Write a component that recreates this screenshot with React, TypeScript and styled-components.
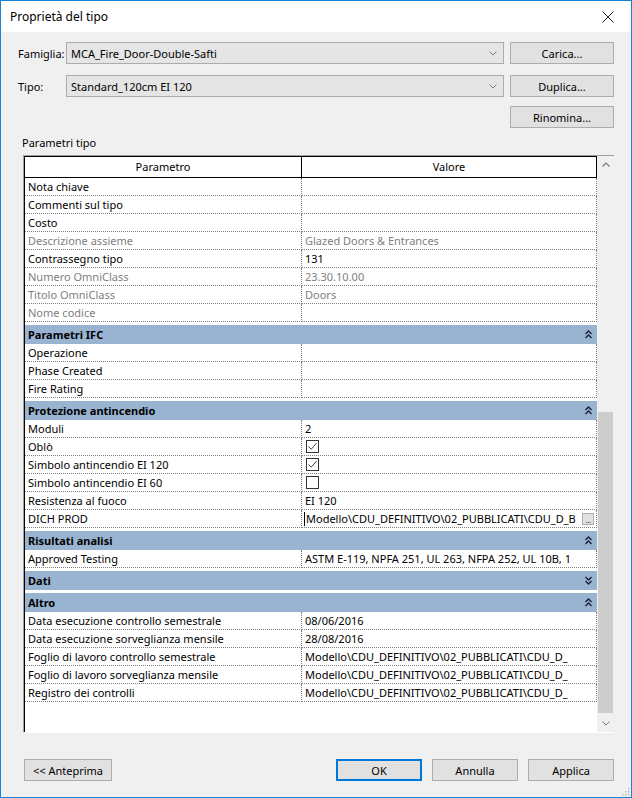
import React from "react";
import styled, { createGlobalStyle } from "styled-components";

const GlobalStyle = createGlobalStyle`
  html, body {
    margin: 0;
    padding: 0;
    background: #f0f0f0;
  }
  body {
    font-family: "Noto Sans", "Segoe UI", sans-serif;
    font-size: 11px;
    color: #000;
  }
  * {
    box-sizing: border-box;
  }
`;

const Window = styled.div`
  width: 632px;
  height: 798px;
  border: 1px solid #1883d7;
  background: #f0f0f0;
  display: flex;
  flex-direction: column;
`;

const TitleBar = styled.div`
  height: 31px;
  flex-shrink: 0;
  background: #fff;
  display: flex;
  align-items: center;
  justify-content: space-between;
  padding-left: 9px;
`;

const Title = styled.div`
  font-size: 12px;
  line-height: 16px;
`;

const CloseButton = styled.div`
  width: 46px;
  height: 31px;
  display: flex;
  align-items: center;
  justify-content: center;
`;

const Body = styled.div`
  flex: 1;
  display: flex;
  flex-direction: column;
  padding: 10px 17px 16px 17px;
`;

const FieldRow = styled.div<{ $gap?: number }>`
  display: grid;
  grid-template-columns: 42px 438px 104px;
  column-gap: 6px;
  align-items: center;
  height: 22px;
  margin-bottom: ${(p) => p.$gap ?? 0}px;
`;

const FieldLabel = styled.div`
  line-height: 15px;
`;

const Combo = styled.div`
  height: 22px;
  background: #e5e5e5;
  border: 1px solid #acacac;
  display: flex;
  align-items: center;
  justify-content: space-between;
  padding: 0 6px 0 4px;
`;

const Button = styled.div<{ $width?: number; $default?: boolean }>`
  width: ${(p) => (p.$width ? `${p.$width}px` : "auto")};
  height: 22px;
  background: #e1e1e1;
  border: 1px solid ${(p) => (p.$default ? "#0078d7" : "#adadad")};
  box-shadow: ${(p) => (p.$default ? "inset 0 0 0 1px #0078d7" : "none")};
  display: flex;
  align-items: center;
  justify-content: center;
  line-height: 15px;
`;

const SideButton = styled(Button)`
  grid-column: 3;
  margin-top: 1px;
`;

const SectionLabel = styled.div`
  margin: 8px 0 5px 4px;
  line-height: 15px;
`;

const TableFrame = styled.div`
  margin-left: 5px;
  width: 591px;
  height: 578px;
  border-top: 1px solid #a0a0a0;
  border-left: 1px solid #a0a0a0;
  border-bottom: 1px solid #fff;
  display: flex;
  background: #fff;
`;

const Grid = styled.div`
  width: 573px;
  border-left: 1px solid #000;
  background: #fff;
  display: flex;
  flex-direction: column;
`;

const HeaderRow = styled.div`
  display: grid;
  grid-template-columns: 277px 295px;
  height: 22px;
  border-top: 1px solid #000;
  border-bottom: 1px solid #000;
`;

const HeaderCell = styled.div`
  display: flex;
  align-items: center;
  justify-content: center;
  border-right: 1px solid #000;
  line-height: 15px;
  padding-bottom: 2px;
`;

const Row = styled.div`
  display: grid;
  grid-template-columns: 277px 295px;
  height: 18px;
`;

const Cell = styled.div<{ $muted?: boolean }>`
  display: flex;
  align-items: center;
  height: 18px;
  padding: 0 0 0 3px;
  border-right: 1px dotted #808080;
  border-bottom: 1px dotted #808080;
  color: ${(p) => (p.$muted ? "#808080" : "#000")};
  line-height: 16px;
  white-space: nowrap;
  overflow: hidden;
`;

const CellText = styled.span`
  flex: 1;
  overflow: hidden;
  white-space: nowrap;
`;

const Caret = styled.span`
  width: 1px;
  height: 14px;
  background: #000;
  margin: 0 1px 0 -1px;
  flex-shrink: 0;
`;

const Browse = styled.span`
  width: 12px;
  height: 12px;
  flex-shrink: 0;
  margin-right: 2px;
  background: #e1e1e1;
  border: 1px solid #adadad;
  font-size: 8px;
  line-height: 8px;
  display: flex;
  align-items: flex-end;
  justify-content: center;
  color: #333;
  letter-spacing: -0.5px;
`;

const CheckBox = styled.span`
  width: 13px;
  height: 13px;
  border: 1px solid #333;
  background: #fff;
  display: flex;
  align-items: center;
  justify-content: center;
  margin-left: 1px;
`;

const GroupRow = styled.div`
  margin-top: 3px;
  height: 19px;
  background: #99b4d1;
  display: flex;
  align-items: center;
  justify-content: space-between;
  padding: 0 5px 1px 3px;
  font-weight: 700;
  line-height: 15px;
`;

const ScrollBar = styled.div`
  width: 17px;
  background: #f0f0f0;
  display: flex;
  flex-direction: column;
  align-items: center;
`;

const ScrollArrow = styled.div`
  width: 17px;
  height: 17px;
  display: flex;
  align-items: center;
  justify-content: center;
  flex-shrink: 0;
`;

const Thumb = styled.div`
  width: 15px;
  height: 301px;
  margin-top: 239px;
  background: #cdcdcd;
`;

const ScrollSpacer = styled.div`
  flex: 1;
`;

const Footer = styled.div`
  margin-top: auto;
  display: flex;
  align-items: center;
  gap: 10px;
  padding-left: 6px;
`;

const FooterSpacer = styled.div`
  flex: 1;
`;

const Grip = styled.svg`
  position: absolute;
  right: 2px;
  bottom: 2px;
`;

const WindowWrap = styled.div`
  position: relative;
  width: 632px;
  height: 798px;
`;

type Value =
  | { kind: "text"; text: string; muted?: boolean }
  | { kind: "check"; checked: boolean }
  | { kind: "path"; text: string };

type Param = { name: string; muted?: boolean; value?: Value };
type Section = { title?: string; open?: boolean; rows: Param[] };

const path = "Modello\\CDU_DEFINITIVO\\02_PUBBLICATI\\CDU_D_";

const sections: Section[] = [
  {
    rows: [
      { name: "Nota chiave" },
      { name: "Commenti sul tipo" },
      { name: "Costo" },
      {
        name: "Descrizione assieme",
        muted: true,
        value: { kind: "text", text: "Glazed Doors & Entrances", muted: true },
      },
      { name: "Contrassegno tipo", value: { kind: "text", text: "131" } },
      {
        name: "Numero OmniClass",
        muted: true,
        value: { kind: "text", text: "23.30.10.00", muted: true },
      },
      {
        name: "Titolo OmniClass",
        muted: true,
        value: { kind: "text", text: "Doors", muted: true },
      },
      { name: "Nome codice", muted: true },
    ],
  },
  {
    title: "Parametri IFC",
    open: true,
    rows: [{ name: "Operazione" }, { name: "Phase Created" }, { name: "Fire Rating" }],
  },
  {
    title: "Protezione antincendio",
    open: true,
    rows: [
      { name: "Moduli", value: { kind: "text", text: "2" } },
      { name: "Oblò", value: { kind: "check", checked: true } },
      { name: "Simbolo antincendio EI 120", value: { kind: "check", checked: true } },
      { name: "Simbolo antincendio EI 60", value: { kind: "check", checked: false } },
      { name: "Resistenza al fuoco", value: { kind: "text", text: "EI 120" } },
      { name: "DICH PROD", value: { kind: "path", text: path + "B" } },
    ],
  },
  {
    title: "Risultati analisi",
    open: true,
    rows: [
      {
        name: "Approved Testing",
        value: { kind: "text", text: "ASTM E-119, NPFA 251, UL 263, NFPA 252, UL 10B, 1" },
      },
    ],
  },
  { title: "Dati", open: false, rows: [] },
  {
    title: "Altro",
    open: true,
    rows: [
      { name: "Data esecuzione controllo semestrale", value: { kind: "text", text: "08/06/2016" } },
      { name: "Data esecuzione sorveglianza mensile", value: { kind: "text", text: "28/08/2016" } },
      { name: "Foglio di lavoro controllo semestrale", value: { kind: "text", text: path } },
      { name: "Foglio di lavoro sorveglianza mensile", value: { kind: "text", text: path } },
      { name: "Registro dei controlli", value: { kind: "text", text: path } },
    ],
  },
];

const Chevron = ({ color = "#7a7a7a" }: { color?: string }) => (
  <svg width="8" height="5" viewBox="0 0 8 5">
    <polyline points="0.5,0.5 4,4 7.5,0.5" fill="none" stroke={color} strokeWidth="1" />
  </svg>
);

const DoubleChevron = ({ up }: { up: boolean }) => (
  <svg width="7" height="9" viewBox="0 0 7 9" style={{ transform: up ? "none" : "rotate(180deg)" }}>
    <polyline points="0.5,4 3.5,1 6.5,4" fill="none" stroke="#1a1a3a" strokeWidth="1.3" />
    <polyline points="0.5,8 3.5,5 6.5,8" fill="none" stroke="#1a1a3a" strokeWidth="1.3" />
  </svg>
);

const Tick = () => (
  <svg width="11" height="11" viewBox="0 0 11 11">
    <polyline points="1.5,5.5 4.2,8.2 9.5,2.2" fill="none" stroke="#444" strokeWidth="1" />
  </svg>
);

const ValueCell = ({ value }: { value?: Value }) => {
  if (!value) return <Cell />;
  if (value.kind === "check")
    return (
      <Cell>
        <CheckBox>{value.checked && <Tick />}</CheckBox>
      </Cell>
    );
  if (value.kind === "path")
    return (
      <Cell>
        <Caret />
        <CellText>{value.text}</CellText>
        <Browse>...</Browse>
      </Cell>
    );
  return (
    <Cell $muted={value.muted}>
      <CellText>{value.text}</CellText>
    </Cell>
  );
};

export default function App() {
  return (
    <>
      <GlobalStyle />
      <WindowWrap>
        <Window>
          <TitleBar>
            <Title>Proprietà del tipo</Title>
            <CloseButton>
              <svg width="12" height="12" viewBox="0 0 12 12">
                <path d="M0.5 0.5 L11.5 11.5 M11.5 0.5 L0.5 11.5" stroke="#222" strokeWidth="1" />
              </svg>
            </CloseButton>
          </TitleBar>
          <Body>
            <FieldRow $gap={11}>
              <FieldLabel>Famiglia:</FieldLabel>
              <Combo>
                <span>MCA_Fire_Door-Double-Safti</span>
                <Chevron />
              </Combo>
              <Button>Carica...</Button>
            </FieldRow>
            <FieldRow $gap={8}>
              <FieldLabel>Tipo:</FieldLabel>
              <Combo>
                <span>Standard_120cm EI 120</span>
                <Chevron />
              </Combo>
              <Button>Duplica...</Button>
            </FieldRow>
            <FieldRow>
              <SideButton>Rinomina...</SideButton>
            </FieldRow>
            <SectionLabel>Parametri tipo</SectionLabel>
            <TableFrame>
              <Grid>
                <HeaderRow>
                  <HeaderCell>Parametro</HeaderCell>
                  <HeaderCell>Valore</HeaderCell>
                </HeaderRow>
                {sections.map((s, i) => (
                  <React.Fragment key={i}>
                    {s.title && (
                      <GroupRow>
                        <span>{s.title}</span>
                        <DoubleChevron up={!!s.open} />
                      </GroupRow>
                    )}
                    {s.rows.map((r) => (
                      <Row key={r.name}>
                        <Cell $muted={r.muted}>{r.name}</Cell>
                        <ValueCell value={r.value} />
                      </Row>
                    ))}
                  </React.Fragment>
                ))}
              </Grid>
              <ScrollBar>
                <ScrollArrow>
                  <svg width="8" height="5" viewBox="0 0 8 5">
                    <polyline points="0.5,4.5 4,1 7.5,4.5" fill="none" stroke="#7a7a7a" strokeWidth="1.2" />
                  </svg>
                </ScrollArrow>
                <Thumb />
                <ScrollSpacer />
                <ScrollArrow>
                  <Chevron color="#7a7a7a" />
                </ScrollArrow>
              </ScrollBar>
            </TableFrame>
            <Footer>
              <Button $width={88}>&lt;&lt; Anteprima</Button>
              <FooterSpacer />
              <Button $width={86} $default>
                OK
              </Button>
              <Button $width={86}>Annulla</Button>
              <Button $width={86}>Applica</Button>
            </Footer>
          </Body>
        </Window>
        <Grip width="10" height="10" viewBox="0 0 10 10">
          {[
            [8, 2],
            [5, 5],
            [8, 5],
            [2, 8],
            [5, 8],
            [8, 8],
          ].map(([x, y]) => (
            <rect key={`${x}-${y}`} x={x} y={y} width="1.5" height="1.5" fill="#b8b8b8" />
          ))}
        </Grip>
      </WindowWrap>
    </>
  );
}
